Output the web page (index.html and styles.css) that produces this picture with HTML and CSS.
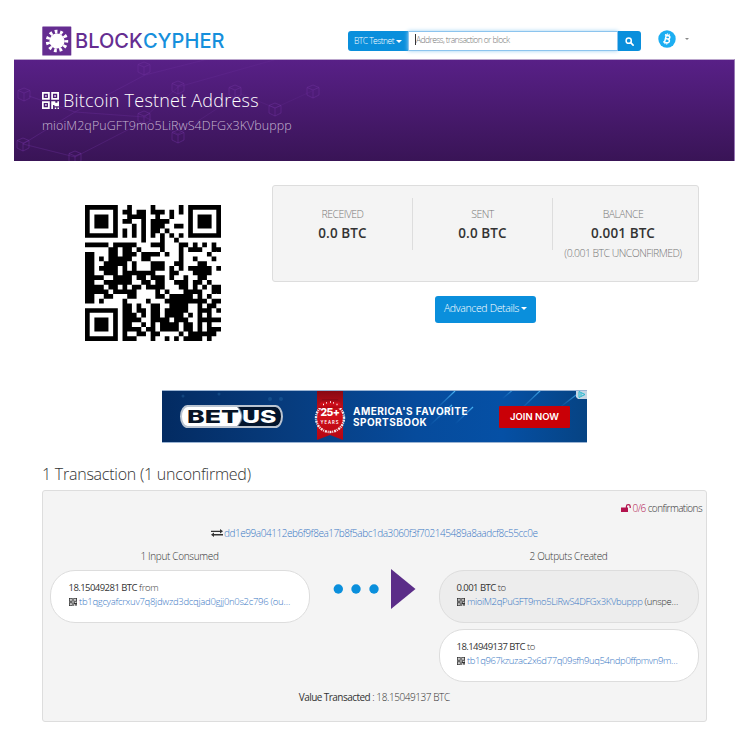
FILE: index.html
```html
<!DOCTYPE html>
<html lang="en">
<head>
<meta charset="utf-8">
<title>Bitcoin Testnet Address</title>
<link rel="stylesheet" href="styles.css">
</head>
<body>
<svg width="0" height="0" class="defs">
  <symbol id="qr" viewBox="0 0 16 16"><path fill-rule="evenodd" d="M0 0h7.3v7.3H0zM1.6 1.6v4h4v-4zM3 3h1.4v1.4H3zM8.7 0H16v7.3H8.7zM10.3 1.6v4h4v-4zM11.6 3H13v1.4h-1.4zM0 8.7h7.3V16H0zM1.6 10.3v4h4v-4zM3 11.6h1.4V13H3zM8.7 8.7h3.8v1.4h2V8.7H16v4.8h-4.3v-1.3h-1.3V16H8.7zM12 14.6h1.4V16H12zM14.6 14.6H16V16h-1.4z"/></symbol>
</svg>
<header class="header">
  <a class="logo">
    <svg width="30" height="30" viewBox="0 0 30 30"><rect x=".3" y=".5" width="29" height="29" rx=".6" fill="#652d91"/><circle cx="15" cy="15" r="7.6" fill="#fff"/><circle cx="15" cy="15" r="9.3" fill="none" stroke="#fff" stroke-width="3.8" stroke-dasharray="2.7 2.612" stroke-dashoffset="1.2"/></svg>
    <span class="block">BLOCK</span><span class="cypher">CYPHER</span>
  </a>
  <div class="search">
    <button class="coin">BTC Testnet<i class="caret"></i></button>
    <div class="field"><span>Address, transaction or block</span></div>
    <button class="go"><svg width="9" height="9" viewBox="0 0 9 9"><circle cx="3.7" cy="3.7" r="2.6" fill="none" stroke="#fff" stroke-width="1.5"/><path d="M5.7 5.7 8.1 8.1" stroke="#fff" stroke-width="1.7" stroke-linecap="round"/></svg></button>
  </div>
  <div class="account">
    <svg width="18" height="18" viewBox="0 0 18 18"><circle cx="9" cy="9" r="8.7" fill="#1caef2"/><g transform="rotate(14 9 9)" fill="none" stroke="#fff"><path d="M6 5.4h3.7c2.2 0 2.2 3.4 0 3.4H7.3M9.7 8.8c2.8 0 2.8 3.8 0 3.8H6M7.4 5.4v7.2" stroke-width="1.5"/><path d="M8.1 3.5v2M10 3.5v2M8.1 12.6v2M10 12.6v2" stroke-width="1"/></g></svg>
    <i class="caret"></i>
  </div>
</header>
<section class="hero">
  <svg class="mesh" width="310" height="101" viewBox="0 0 310 101"><defs><linearGradient id="fade" gradientUnits="userSpaceOnUse" x1="0" y1="0" x2="310" y2="0"><stop stop-color="#7434a8" stop-opacity=".7"/><stop offset="1" stop-color="#6d309d" stop-opacity=".35"/></linearGradient><g id="cube" fill="none"><path d="M0-6 6-3.5V4L0 7-6 4V-3.5ZM-6-3.5 0-1 6-3.5M0-1V7"/></g></defs>
    <g stroke="#6d309d" stroke-opacity=".6" fill="none" stroke-width=".8">
      <path stroke="url(#fade)" d="M15 36 61 52 131 15 202-3M61 52 131 57 164 74 224 35M131 57 164 27 274-4M9 84 61 52M9 84 61 97 131 61M227 34 261 48 298 31"/>
      <use href="#cube" x="10" y="34"/><use href="#cube" x="9" y="84"/><use href="#cube" x="61" y="97"/><use href="#cube" x="130" y="8"/><use href="#cube" x="130" y="57"/><use href="#cube" x="164" y="27"/><use href="#cube" x="164" y="76"/><use href="#cube" x="221" y="31"/><use href="#cube" x="261" y="49"/><use href="#cube" x="299" y="31"/>
    </g></svg>
  <h1><svg width="17" height="17" fill="#fff"><use href="#qr"/></svg><span>Bitcoin Testnet Address</span></h1>
  <p>mioiM2qPuGFT9mo5LiRwS4DFGx3KVbuppp</p>
</section>
<section class="summary">
  <svg class="code" id="code" viewBox="0 0 29 29" width="136" height="136"></svg>
  <div class="side">
    <div class="stats">
      <div><small>RECEIVED</small><b>0.0 BTC</b></div>
      <div><small>SENT</small><b>0.0 BTC</b></div>
      <div><small>BALANCE</small><b>0.001 BTC</b><em>(0.001 BTC UNCONFIRMED)</em></div>
    </div>
    <button class="advanced">Advanced Details<i class="caret"></i></button>
  </div>
</section>
<aside class="ad">
  <svg class="rays" width="425" height="53" viewBox="0 0 425 53"><defs><linearGradient id="ray" x1="0" y1="1" x2="1" y2="0"><stop offset="0" stop-color="#1e78c8" stop-opacity="0"/><stop offset="1" stop-color="#49b5f5"/></linearGradient></defs><g stroke="url(#ray)" stroke-width="1.2"><path d="M273 20 293 1"/><path d="M340 9 353-2"/><path d="M358 20 380-1"/><path d="M397 18 418 2"/><path d="M267 36 290 15"/><path d="M293 34 311 17"/></g><g fill="#2c72ad" opacity=".35"><circle cx="21" cy="6" r="1.5"/><circle cx="57" cy="4" r="1.5"/><circle cx="108" cy="9" r="2"/><circle cx="119" cy="9" r="2"/></g></svg>
  <div class="betus"><span>BET</span><span class="us">US</span></div>
  <svg class="ribbon" width="34" height="53" viewBox="0 0 34 53"><defs><linearGradient id="rb" x2="0" y2="1"><stop stop-color="#850813"/><stop offset=".5" stop-color="#d3101b"/><stop offset="1" stop-color="#b30612"/></linearGradient></defs><path d="M4 0h26v50l-13-5-13 5Z" fill="url(#rb)"/><circle cx="17" cy="28" r="14" fill="none" stroke="#fff" stroke-width="2.4" stroke-dasharray="2 .9 1 .8" stroke-dashoffset="3" pathLength="88" opacity=".9"/><path d="M5 18 9 9h16l4 9Z" fill="url(#rb)"/><path d="M10 14.5h1M13 12.8h1M17 12h1M20 12.8h1M23.5 14.5h1" stroke="#fff" stroke-width="1.3"/><text x="17" y="25.5" class="yr">25+</text><text x="17" y="34" class="ys">YEARS</text></svg>
  <div class="slogan">AMERICA'S FAVORITE<br>SPORTSBOOK</div>
  <div class="join">JOIN NOW</div>
  <svg class="choice" width="11" height="9" viewBox="0 0 11 9"><path d="M0 0h11v9H2L0 7Z" fill="#c6d6e5"/><path d="M3 1.5 9 4.5 3 7.5ZM5 3v3" fill="none" stroke="#22b9cf"/></svg>
</aside>
<h2>1 Transaction (1 unconfirmed)</h2>
<section class="tx">
  <div class="conf"><svg width="10" height="8" viewBox="0 0 10 8"><path d="M0 3.5h7V8H0Z" fill="#b3134e"/><path d="M5.4 4V2.4a1.9 1.7 0 0 1 3.8 0V4" fill="none" stroke="#b3134e" stroke-width="1.2"/></svg><span class="num">0/6</span><span class="word">confirmations</span></div>
  <div class="hash"><svg width="12" height="8" viewBox="0 0 12 8"><path d="M0 1.7h9V0l3 2.3-3 2.3V2.9H0ZM12 5.1H3V3.5L0 5.8 3 8V6.4h9Z" fill="#333"/></svg><a>dd1e99a04112eb6f9f8ea17b8f5abc1da3060f3f702145489a8aadcf8c55cc0e</a></div>
  <div class="flow">
    <div class="col"><h3>1 Input Consumed</h3>
      <div class="pill"><p class="amt"><b>18.15049281 BTC</b> from</p><p class="addr"><svg width="8" height="8"><use href="#qr"/></svg><span><a>tb1qgcyafcrxuv7q8jdwzd3dcqjad0gjj0n0s2c796 (ou…</a></span></p></div>
    </div>
    <svg class="arrow" width="84" height="42" viewBox="0 0 84 42"><g fill="#0a8fdc"><circle cx="5.3" cy="20" r="4.7"/><circle cx="23" cy="20" r="4.7"/><circle cx="41" cy="20" r="4.7"/></g><path d="M58 0 82.5 20 58 40Z" fill="#5b2d88"/></svg>
    <div class="col outputs"><h3>2 Outputs Created</h3>
      <div class="pill own"><p class="amt"><b>0.001 BTC</b> to</p><p class="addr"><svg width="8" height="8"><use href="#qr"/></svg><span><a>mioiM2qPuGFT9mo5LiRwS4DFGx3KVbuppp</a> (unspe…</span></p></div>
      <div class="pill"><p class="amt"><b>18.14949137 BTC</b> to</p><p class="addr"><svg width="8" height="8"><use href="#qr"/></svg><span><a>tb1q967kzuzac2x6d77q09sfh9uq54ndp0ffpmvn9m…</a></span></p></div>
    </div>
  </div>
  <p class="value"><b>Value Transacted</b> : 18.15049137 BTC</p>
</section>
<script src="qr.js"></script>
</body>
</html>
```
FILE: styles.css
```css
* { box-sizing: border-box; }
body { margin: 0; width: 754px; height: 738px; overflow: hidden; background: #fff; color: #333; font: 300 10px/14px "Open Sans", "Noto Sans", sans-serif; }
h1, h2, h3, p { margin: 0; font-weight: 300; }
button { border: 0; padding: 0; color: #fff; background: #0a8fdc; font: inherit; letter-spacing: inherit; display: flex; align-items: center; justify-content: center; }
svg { display: block; flex: none; }
.defs { position: absolute; }
.caret { display: inline-block; border: 2.5px solid transparent; border-top-color: currentColor; border-bottom: 0; margin-left: 2px; }
.header { height: 59px; padding: 0 63px 0 42px; display: flex; align-items: flex-start; }
.logo { display: flex; width: 305px; padding-top: 26px; font: 500 20px/30px Inter, sans-serif; letter-spacing: .05px; }
.block { color: #652d91; margin-left: 3px; }
.cypher { color: #168fdc; }
.search { display: flex; width: 293px; height: 20px; margin: 31px 0 0 1px; font-size: 8.5px; letter-spacing: -.5px; }
.search .caret, .advanced .caret { border-width: 3px 3px 0; }
.coin { width: 60px; border-radius: 3px 0 0 3px; }
.field { flex: 1; border: 1px solid #8cc4ee; box-shadow: 0 0 4px #9bd0f3; color: #777; line-height: 16px; padding-left: 6px; letter-spacing: -.6px; }
.field span { border-left: 1px solid #333; }
.go { width: 23px; border-radius: 0 3px 3px 0; }
.account { display: flex; align-items: center; gap: 7px; margin: 30px 0 0 17px; color: #888; }
.hero { position: relative; width: 720.5px; height: 102px; margin-left: 14px; padding: 30px 0 0 28px; border-top: 1px solid #bba6cd; border-right: 1px solid #9878b5; background: linear-gradient(#582087, #391456); color: #fff; }
.mesh { position: absolute; left: 0; top: 0; }
h1 { position: relative; display: flex; align-items: center; height: 20px; font-size: 18px; line-height: 20px; }
h1 span { margin-left: 4px; letter-spacing: .22px; }
.hero p { position: relative; color: #c5b5d1; font-size: 12.5px; line-height: 16px; margin-top: 8px; letter-spacing: .07px; }
.summary { display: flex; height: 229px; padding: 24px 55px 0 85px; }
.code { margin: 19.5px 51px 0 0; }
.side { width: 427px; }
.stats { display: flex; height: 97px; padding: 12px 5px 0 0; border: 1px solid #ddd; border-radius: 3px; background: #f4f4f4; text-align: center; }
.stats div { width: 140px; flex: none; height: 52px; border-right: 1px solid #ddd; padding-top: 9px; }
.stats div:last-child { border: 0; }
.stats small, .stats b, .stats em { display: block; white-space: nowrap; }
.stats small { font-size: 10.5px; line-height: 14px; color: #777; letter-spacing: -.55px; }
.stats b { font-size: 13.5px; line-height: 24px; font-weight: 600; color: #333; letter-spacing: .1px; }
.stats em { font-style: normal; font-size: 10.5px; line-height: 17px; color: #777; letter-spacing: -.55px; }
.advanced { width: 101px; height: 27px; margin: 14px 0 0 163px; border-radius: 3px; font-size: 10.5px; padding-bottom: 3px; letter-spacing: -.35px; }
.ad { position: relative; display: flex; width: 425px; height: 53px; margin-left: 162px; background: linear-gradient(90deg, #032b62 0%, #073c7e 30%, #064b9c 60%, #0550a5 80%, #064383 100%); border: solid #9bb4d3; border-width: 1px 0; overflow: hidden; color: #fff; font-family: Inter, sans-serif; }
.rays { position: absolute; left: 0; top: -1px; }
.betus { position: relative; width: 103px; height: 23px; margin: 14px 0 0 18px; border-radius: 8px / 12px; border: 2px solid #bac4d1; background: radial-gradient(ellipse 61px 26px at 0 50%, #fff 96%, #03152d 100%); display: flex; color: #071426; font: 800 18px/19px Inter, sans-serif; }
.betus span { padding-left: 5px; transform: scaleX(1.48); transform-origin: 5px 50%; width: 60px; flex: none; }
.betus .us { color: #fff; width: 30px; padding-left: 0; transform-origin: 0 50%; transform: scaleX(1.38); }
.ribbon { position: relative; margin: -1px 0 0 30px; }
.yr { font: 800 10.5px Inter, sans-serif; fill: #fff; text-anchor: middle; letter-spacing: -.6px; }
.ys { font: 600 4.2px Inter, sans-serif; fill: #fff; text-anchor: middle; letter-spacing: 1px; }
.slogan { position: relative; width: 145px; margin: 15px 0 0 6px; font-size: 10px; line-height: 11px; font-weight: 700; letter-spacing: .45px; white-space: nowrap; }
.join { position: relative; width: 71px; height: 22px; margin: 15px 0 0 1px; border-radius: 1px; background: #c90007; text-align: center; font-weight: 600; font-size: 9.5px; line-height: 22px; }
.choice { position: absolute; right: 0; top: -1px; }
h2 { margin: 20px 0 0 42px; font-size: 16px; line-height: 22px; height: 27px; color: #333; letter-spacing: -.24px; }
.tx { width: 665.5px; height: 232px; margin-left: 41.5px; border: 1px solid #ddd; border-radius: 3px; background: #f4f4f4; }
.conf { display: flex; justify-content: flex-end; align-items: center; height: 14px; margin: 10px 4px 0 0; letter-spacing: -.58px; }
.num { color: #b3134e; margin: 0 2px 0 2px; }
.hash { display: flex; align-items: center; height: 14px; margin: 11px 0 0 168.5px; gap: 1px; letter-spacing: -.45px; }
a { color: #3a78c4; }
.flow { display: flex; padding: 9px 7px 0; height: 150px; }
.col { width: 260px; }
h3 { font-size: 10px; line-height: 14px; height: 21px; text-align: center; letter-spacing: -.32px; }
.pill { width: 260px; height: 53px; border: 1px solid #ddd; border-radius: 25px; padding: 10px 0 0 18px; background: #fff; margin-bottom: 6px; white-space: nowrap; font-size: 9.5px; letter-spacing: -.29px; }
.outputs .pill { padding-left: 17px; letter-spacing: -.37px; }
.pill.own { background: #ededed; }
.amt b, .value b { font-weight: 400; letter-spacing: -.55px; }
.addr { display: flex; align-items: center; gap: 2.5px; }
.addr svg { fill: #333; }
.arrow { margin: 20px 22px 0 23px; }
.value { text-align: center; letter-spacing: -.43px; }
```
FILE: qr.js
```javascript
const rows = [
  "1111111001000010000010 1111111",
  "1000001011011011101010 1000001",
  "1011101001111001001000 1011101",
  "1011101011001011110000 1011101",
  "1011101000101011100110 1011101",
  "1000001010101011010000 1000001",
  "1111111010101010101010 1111111",
  "0000000000001000100100 0000000",
  "1111101111100011100011 0101010",
  "0000011011010000100010 1110011",
  "1100011011101111010010 0000100",
  "1101011111001100000010 0100010",
  "1100111110100011100110 0011000",
  "1101111010100011101010 1111101",
  "1100111011111110001100 0111100",
  "1111001111011011101001 0011000",
  "1100111111001101100111 0110100",
  "1111011010110111100011 0101011",
  "1111101111100001010001 1110011",
  "1100110001100001101111 1010100",
  "1101000010000100011111 1111011",
  "0000000011010011001111 0010110",
  "1111111011011011011111 0011101",
  "1000001011101011011110 1010100",
  "1011101011110011110111 0011111",
  "1011101011001010111101 1010100",
  "1011101011110110111101 1010111",
  "1000001010011011000010 1111110",
  "1111111011100010010101 1110100"
];
let d = "";
rows.forEach((row, y) => [...row.replace(/ /g, "")].forEach((v, x) => {
  if (v === "1") d += `M${x} ${y}h1v1h-1z`;
}));
document.getElementById("code").innerHTML = `<path d="${d}"/>`;
```
